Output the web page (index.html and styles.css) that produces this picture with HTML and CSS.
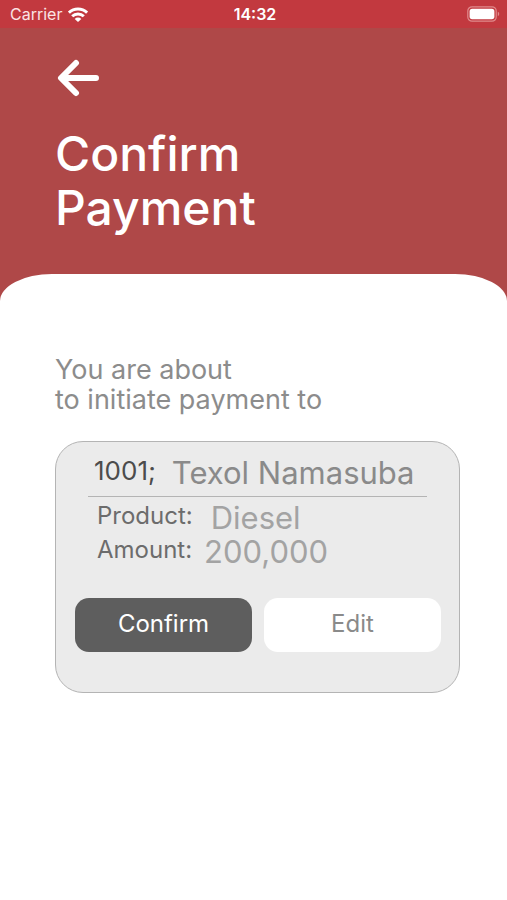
FILE: index.html
```html
<!DOCTYPE html>
<html lang="en">
<head>
  <meta charset="utf-8">
  <meta name="viewport" content="width=device-width, initial-scale=1">
  <title>Confirm Payment</title>
  <link rel="stylesheet" href="styles.css">
</head>
<body>
  <div class="status-bar">
    <div class="carrier">
      <span>Carrier</span>
      <svg class="wifi" viewBox="0 0 20 15" aria-hidden="true">
        <g fill="none" stroke="currentColor" stroke-width="3">
          <path d="M0.9 5.6a13 13 0 0 1 18.2 0"/>
          <path d="M4.2 9.3a8.3 8.3 0 0 1 11.6 0"/>
        </g>
        <path fill="currentColor" d="M10 15 6.7 11.9a4.7 4.7 0 0 1 6.6 0z"/>
      </svg>
    </div>
    <time class="clock">14:32</time>
    <svg class="battery" viewBox="0 0 33 16" aria-hidden="true">
      <rect x="0.8" y="0.8" width="28.4" height="14.4" rx="4.2" fill="none" stroke="#e08a8c" stroke-width="1.2"/>
      <rect x="2.6" y="2.8" width="24.8" height="10.4" rx="2.6" fill="#fff"/>
      <path d="M30.8 5.8a2.4 2.4 0 0 1 0 4.4z" fill="#e08a8c"/>
    </svg>
  </div>

  <header class="header">
    <button class="back" type="button" aria-label="Back">
      <svg viewBox="0 0 46 38" aria-hidden="true">
        <path d="M41 19H7M21 4 6 19 21 34" fill="none" stroke="currentColor" stroke-width="6" stroke-linecap="round" stroke-linejoin="round"/>
      </svg>
    </button>
    <h1 class="title">Confirm<br>Payment</h1>
  </header>

  <main class="sheet">
    <p class="intro">You are about<br>to initiate payment to</p>
    <section class="card">
      <div class="payee">
        <span class="code">1001;</span>
        <span class="name">Texol Namasuba</span>
      </div>
      <dl class="details">
        <div class="row">
          <dt>Product:</dt>
          <dd class="product">Diesel</dd>
        </div>
        <div class="row">
          <dt>Amount:</dt>
          <dd>200,000</dd>
        </div>
      </dl>
      <div class="actions">
        <button class="button primary" type="button">Confirm</button>
        <button class="button" type="button">Edit</button>
      </div>
    </section>
  </main>
</body>
</html>
```
FILE: styles.css
```css
* {
  box-sizing: border-box;
}

body {
  display: flex;
  flex-direction: column;
  min-height: 100vh;
  margin: 0;
  background: #af4848;
  color: #fff;
  font-family: Inter, "Liberation Sans", sans-serif;
}

.status-bar {
  display: grid;
  grid-template-columns: 1fr auto 1fr;
  align-items: center;
  height: 28px;
  padding: 0 7px 0 10px;
  background: #c2393f;
}

.carrier {
  display: flex;
  align-items: center;
  gap: 6px;
  color: #fbe4e4;
  font-size: 16px;
}

.wifi {
  width: 20px;
  height: 15px;
  color: #fff;
}

.clock {
  font-size: 16px;
  font-weight: 600;
}

.battery {
  justify-self: end;
  width: 33px;
  height: 16px;
}

.header {
  padding: 31px 47px 39px 55px;
}

.back {
  display: block;
  padding: 0;
  border: 0;
  background: none;
  color: inherit;
  cursor: pointer;
}

.back svg {
  display: block;
  width: 46px;
  height: 38px;
}

.title {
  margin: 30px 0 0;
  font-size: 48px;
  font-weight: 500;
  line-height: 54px;
}

.sheet {
  flex: 1;
  padding: 81px 47px 40px 55px;
  border-radius: 52px 52px 0 0 / 27px 27px 0 0;
  background: #fff;
}

.intro {
  margin: 0;
  color: #8c8c8c;
  font-size: 27px;
  line-height: 30px;
}

.card {
  margin-top: 26px;
  padding: 8px 18px 40px 19px;
  border: 1px solid #b4b4b4;
  border-radius: 28px;
  background: #ebebeb;
}

.payee {
  display: flex;
  gap: 16px;
  margin: 0 14px 0 13px;
  padding: 0 6px;
  border-bottom: 1px solid #b4b4b4;
  line-height: 46px;
  white-space: nowrap;
}

.code {
  color: #4c4c4c;
  font-size: 26px;
  line-height: 42px;
}

.name {
  color: #8a8a8a;
  font-size: 31px;
}

.details {
  margin: 4px 22px 0;
}

.row {
  display: flex;
  gap: 12px;
  line-height: 34px;
}

.row dt {
  color: #6c6c6c;
  font-size: 24px;
  line-height: 30px;
}

.row dd {
  margin: 0;
  color: #a3a3a3;
  font-size: 31px;
}

.row .product {
  margin-left: 6px;
}

.actions {
  display: grid;
  grid-template-columns: 1fr 1fr;
  gap: 12px;
  margin-top: 29px;
}

.button {
  height: 54px;
  padding: 0 0 4px;
  border: 0;
  border-radius: 14px;
  background: #fff;
  color: #8a8a8a;
  font-family: inherit;
  font-size: 24px;
  cursor: pointer;
}

.primary {
  background: #5e5e5e;
  color: #fff;
}
```
